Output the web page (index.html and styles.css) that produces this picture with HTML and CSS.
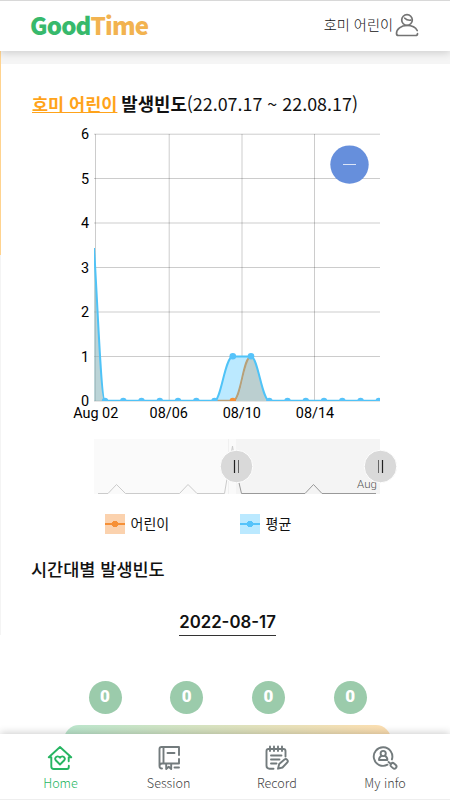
FILE: index.html
```html
<!DOCTYPE html>
<html lang="ko">
<head>
<meta charset="utf-8">
<meta name="viewport" content="width=device-width, initial-scale=1">
<title>GoodTime</title>
<link rel="stylesheet" href="styles.css">
</head>
<body>
<header class="topbar">
  <div class="logo"><span class="logo-good">Good</span><span class="logo-time">Time</span></div>
  <div class="user">
    <span class="user-name">호미 어린이</span>
    <svg class="user-icon" width="24" height="24" viewBox="0 0 24 24" fill="none" stroke="#737373" stroke-width="1.7" stroke-linecap="round">
      <circle cx="12" cy="7" r="5.3"/>
      <path d="M9.8 5.2Q12 7.6 15.8 7.2M22.2 17.5C20.5 14 16.5 12.5 12 12.5C6 12.5 1.5 16 1.5 20.5Q1.5 22.5 3.5 22.5H20.5Q22.5 22.5 22.5 20.7"/>
    </svg>
  </div>
</header>
<main class="content">
  <h1 class="title"><span class="title-name">호미 어린이</span> <b>발생빈도</b><span class="title-range">(22.07.17 ~ 22.08.17)</span></h1>
  <svg class="chart" width="450" height="380" viewBox="0 120 450 380">
    <defs>
      <clipPath id="plot"><rect x="94" y="130" width="286" height="271"/></clipPath>
    </defs>
    <g class="grid">
      <path d="M95.5 134V401M169.2 134V401M242 134V401M314.5 134V401"/>
      <path d="M94 134.2H380M94 178.5H380M94 223H380M94 267.5H380M94 312H380M94 356.5H380M94 401H380"/>
    </g>
    <g clip-path="url(#plot)">
      <path d="M94 250C98 310 101 401 105 401H94Z" fill="#f7954055"/>
      <path d="M94 250C98 310 101 401 105 401H94Z" fill="#5bc8fc66"/>
      <path d="M214.5 401C221 401 225 356.5 232.8 356.5H251C258 356.5 262 401 269.3 401Z" fill="#bbe9ff"/>
      <path d="M235 401C242 398 245 356.5 251 356.5S263 401 269.3 401Z" fill="#bbcfd0"/>
      <path d="M215 400.8H233C241 400.8 243 356.5 251 356.5" fill="none" stroke="#b8a078" stroke-width="2"/>
      <path class="average" d="M94 248C98 310 101 400.8 105 400.8H214.5C221 400.8 225 356.5 232.8 356.5H251C258 356.5 262 400.8 269.3 400.8H380"/>
      <g fill="#56c3fa">
        <circle cx="105" cy="401" r="3.2"/><circle cx="123.3" cy="401" r="3.2"/><circle cx="141.5" cy="401" r="3.2"/><circle cx="159.8" cy="401" r="3.2"/><circle cx="178" cy="401" r="3.2"/><circle cx="196.3" cy="401" r="3.2"/><circle cx="214.5" cy="401" r="3.2"/><circle cx="232.8" cy="356.3" r="3.3"/><circle cx="251" cy="356.3" r="3.3"/><circle cx="269.3" cy="401" r="3.2"/><circle cx="287.5" cy="401" r="3.2"/><circle cx="305.8" cy="401" r="3.2"/><circle cx="324" cy="401" r="3.2"/><circle cx="342.3" cy="401" r="3.2"/><circle cx="360.6" cy="401" r="3.2"/><circle cx="378.8" cy="401" r="3.2"/>
      </g>
      <circle cx="232.8" cy="401" r="3.2" fill="#f69037"/>
    </g>
    <g class="axis" text-anchor="end">
      <text x="89" y="139.3">6</text><text x="89" y="183.8">5</text><text x="89" y="228.2">4</text><text x="89" y="272.7">3</text><text x="89" y="317.2">2</text><text x="89" y="361.7">1</text><text x="89" y="406">0</text>
    </g>
    <g class="axis" text-anchor="middle">
      <text x="95.7" y="418.3">Aug 02</text><text x="168.7" y="418.3">08/06</text><text x="241.8" y="418.3">08/10</text><text x="315" y="418.3">08/14</text>
    </g>
    <circle cx="349.5" cy="164.6" r="19.2" fill="#668fdc"/>
    <path d="M343 164.5H356" stroke="#dce5f7" stroke-width="1"/>
    <rect x="94" y="439" width="142" height="55" fill="#fafafa"/>
    <rect x="236" y="439" width="144" height="55" fill="#f4f4f4"/>
    <path d="M228.5 439V494" stroke="#f0f0f0"/>
    <path d="M98 493.5H108L116.5 484.5L125.5 493.5H179.5L188 484.5L197 493.5H224.5L232.5 446L236 470" fill="none" stroke="#cbcbcb"/>
    <path d="M236 470L241.5 493.5H305L313.5 484.5L322 493.5H376" fill="none" stroke="#999"/>
    <text class="scroll-label" x="357" y="488">Aug</text>
    <g class="grips">
      <circle cx="236.5" cy="466.5" r="16.3"/><circle cx="380.5" cy="466.5" r="16.3"/>
      <path d="M234.5 460V473M382.5 460V473" stroke="#222" stroke-width="1.2"/>
      <path d="M238.5 460V473M378.5 460V473" stroke="#666"/>
    </g>
  </svg>
  <div class="legend">
    <div class="legend-item child"><span class="swatch"></span><span class="legend-label">어린이</span></div>
    <div class="legend-item mean"><span class="swatch"></span><span class="legend-label">평균</span></div>
  </div>
  <h2 class="subtitle">시간대별 발생빈도</h2>
  <div class="date"><span>2022-08-17</span></div>
  <div class="counts"><span>0</span><span>0</span><span>0</span><span>0</span></div>
  <div class="band"></div>
</main>
<nav class="tabs">
  <a class="tab active">
    <svg width="26" height="26" viewBox="0 0 26 26">
      <path d="M1.8 12.3L13 2L24.2 12.3H21.7V16.2M4.3 12.3V21.5Q4.3 24 6.8 24H20Q21.8 24 21.8 22V20.8M4.3 12.3H1.8"/>
      <path d="M13 19.5L8.7 15.3C6.8 12.8 10.3 9.7 13 12.7C15.7 9.7 19.2 12.8 17.3 15.3Z"/>
    </svg>
    Home
  </a>
  <a class="tab">
    <svg width="26" height="26" viewBox="0 0 26 26">
      <path d="M23 10V2H5.5Q3.5 2 3.5 4V21Q3.5 23.5 6 23.5M7.5 2.5V18.5M23 14V18.5H6Q3.5 18.5 3.5 21M11.5 8H18.5M10.2 19V24L12.7 21.8L15.2 24V19M18.5 22.5H23"/>
    </svg>
    Session
  </a>
  <a class="tab">
    <svg width="26" height="26" viewBox="0 0 26 26">
      <path d="M9.5 23.7H5.5Q2.5 23.7 2.5 20.7V6Q2.5 4 4.5 4H19.5Q21.5 4 21.5 6V11.5M6 1.5V6M10 1.5V6M14 1.5V6M18 1.5V6M7 10.5H17.5M7 14.5H15.5M7 18.5H12.5"/>
      <path d="M14 23.7L15.2 19L20.5 14.5Q22 13.5 23.2 14.8Q24.5 16.2 23.2 17.5L18.5 22.5Z"/>
    </svg>
    Record
  </a>
  <a class="tab">
    <svg width="26" height="26" viewBox="0 0 26 26">
      <path d="M15.5 19.7A9.3 9.3 0 1 1 19.9 14.4M16.5 17L19 19"/>
      <circle cx="11.2" cy="8.5" r="2.6"/>
      <path d="M9.5 10.8C7.8 11.5 7 12.7 7 15H15.4C15.4 12.7 14.6 11.5 12.9 10.8"/>
      <rect x="18.4" y="18.7" width="6.3" height="4.2" rx="2" transform="rotate(42 21.5 20.8)"/>
    </svg>
    My info
  </a>
</nav>
</body>
</html>
```

FILE: styles.css
```css
* {
  box-sizing: border-box;
}

body {
  margin: 0;
  width: 450px;
  height: 800px;
  display: flex;
  flex-direction: column;
  overflow: hidden;
  background: #fff;
  color: #111;
  font-family: "Noto Sans CJK KR", "Noto Sans", sans-serif;
}

.topbar {
  flex: none;
  height: 51px;
  display: flex;
  align-items: center;
  justify-content: space-between;
  padding: 0 31px 2px 30px;
  border-top: 1px solid #d8d8d8;
  background: #fff;
  box-shadow: 0 2px 8px rgba(0, 0, 0, 0.16);
  z-index: 1;
}

.logo {
  font-family: "Noto Sans CJK KR", sans-serif;
  font-size: 24px;
  font-weight: 900;
  line-height: 30px;
  letter-spacing: -0.85px;
}

.logo-good {
  color: #37b96c;
}

.logo-time {
  color: #f2b350;
}

.user {
  display: flex;
  align-items: center;
  gap: 2px;
}

.user-name {
  font-size: 14.2px;
  font-weight: 300;
  line-height: 20px;
  padding-bottom: 2px;
}

.user-icon {
  display: block;
}

.content {
  flex: 1;
  min-height: 0;
  overflow: hidden;
  display: flex;
  flex-direction: column;
  padding-top: 13px;
  background:
    linear-gradient(#ffd38f, #ffd38f) 0 0 / 1px 204px no-repeat,
    linear-gradient(#f4f4f4, #f4f4f4) 0 204px / 1px 380px no-repeat,
    linear-gradient(#f5f5f5, #f5f5f5) 0 0 / 100% 13px no-repeat;
}

.title {
  flex: none;
  height: 56px;
  margin: 0;
  padding: 27px 0 0 32px;
  font-size: 17.5px;
  font-weight: 400;
  line-height: 25px;
  white-space: nowrap;
}

.title b {
  margin-left: -1px;
  font-size: 17.8px;
  font-weight: 700;
}

.title-name {
  color: #ffa31a;
  font-weight: 700;
  text-decoration: underline;
}

.title-range {
  font-size: 17.9px;
}

.chart {
  flex: none;
  display: block;
}

.grid path {
  fill: none;
  stroke: #000;
  stroke-opacity: 0.2;
}

.average {
  fill: none;
  stroke: #4fc3f7;
  stroke-width: 2;
}

.axis {
  font-family: Roboto, sans-serif;
  font-size: 14.4px;
  fill: #000;
}

.scroll-label {
  font-family: Roboto, sans-serif;
  font-size: 11.5px;
  font-weight: 300;
  fill: #555;
}

.grips circle {
  fill: #d9d9d9;
  stroke: #fff;
  stroke-width: 1;
}

.legend {
  flex: none;
  display: grid;
  grid-template-columns: 135px 135px;
  height: 48px;
  padding: 14px 0 0 104.5px;
  font-size: 14px;
  line-height: 18px;
}

.legend-item {
  display: flex;
  gap: 6px;
  height: 20px;
}

.swatch {
  width: 20px;
  height: 20px;
}

.child .swatch {
  background:
    radial-gradient(circle, #f69037 3px, transparent 3.5px),
    linear-gradient(#f69037, #f69037) center / 20px 2px no-repeat,
    #fbd2ae;
}

.mean .swatch {
  background:
    radial-gradient(circle, #56c3fa 3px, transparent 3.5px),
    linear-gradient(#56c3fa, #56c3fa) center / 20px 2px no-repeat,
    #bbe9ff;
}

.subtitle {
  flex: none;
  height: 49px;
  margin: 0;
  padding: 8px 0 0 31px;
  font-size: 17.5px;
  font-weight: 500;
  line-height: 25px;
}

.date {
  flex: none;
  height: 84px;
  padding: 16px 0 0 5px;
  text-align: center;
}

.date span {
  display: inline-block;
  height: 23px;
  border-bottom: 1px solid #333;
  font-family: Inter, sans-serif;
  font-size: 16.8px;
  font-weight: 600;
  line-height: 18px;
  vertical-align: top;
}

.counts {
  flex: none;
  display: flex;
  gap: 48.7px;
  height: 44px;
  padding-left: 88.5px;
}

.counts span {
  width: 33px;
  height: 33px;
  border-radius: 50%;
  background: #9bcbab;
  color: #fff;
  font-family: Roboto, sans-serif;
  font-size: 17px;
  font-weight: 900;
  line-height: 31px;
  text-align: center;
}

.band {
  flex: none;
  width: 327px;
  height: 40px;
  margin-left: 64px;
  border-radius: 15px;
  background: linear-gradient(90deg, #bbe6cd, #fddfb1);
}

.tabs {
  flex: none;
  height: 66px;
  display: grid;
  grid-template-columns: repeat(4, 108.2px);
  padding: 11px 0 0 6.4px;
  border-bottom: 1px solid #eee;
  background: #fff;
  box-shadow: 0 -1px 8px rgba(0, 0, 0, 0.2);
  z-index: 1;
}

.tab {
  display: flex;
  flex-direction: column;
  align-items: center;
  gap: 2px;
  color: #444;
  font-size: 12.6px;
  font-weight: 300;
  line-height: 19px;
}

.tab svg {
  fill: none;
  stroke: #737b7d;
  stroke-width: 1.9;
  stroke-linecap: round;
  stroke-linejoin: round;
}

.active {
  color: #27b562;
}

.active svg {
  stroke: #27b562;
}
```
